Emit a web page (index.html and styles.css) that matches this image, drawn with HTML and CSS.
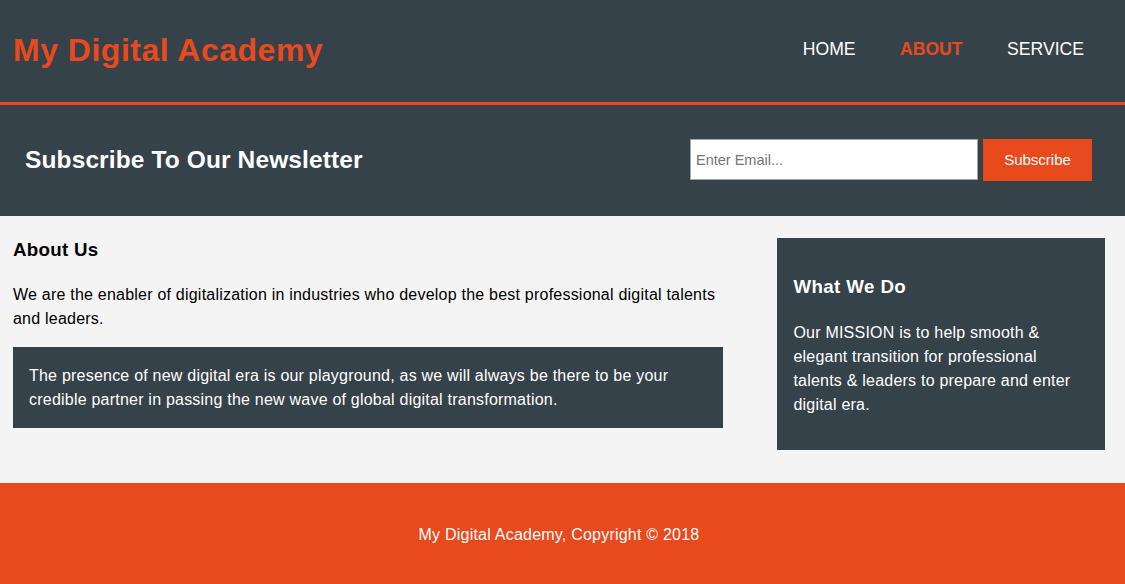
FILE: index.html
```html
<!DOCTYPE html>
<html lang="en">
<head>
<meta charset="utf-8">
<title>My Digital Academy | About</title>
<link rel="stylesheet" href="styles.css">
</head>
<body>
<header class="site-header">
  <div class="header-inner">
    <h1 class="logo">My Digital Academy</h1>
    <nav>
      <ul class="nav-list">
        <li><a class="nav-link" href="#">Home</a></li>
        <li><a class="nav-link current" href="#">About</a></li>
        <li><a class="nav-link" href="#">Service</a></li>
      </ul>
    </nav>
  </div>
</header>

<section class="newsletter">
  <h1 class="newsletter-title">Subscribe To Our Newsletter</h1>
  <form class="newsletter-form">
    <input class="email-input" type="email" placeholder="Enter Email...">
    <button class="subscribe-btn" type="button">Subscribe</button>
  </form>
</section>

<section class="main">
  <article class="main-col">
    <h3 class="page-title">About Us</h3>
    <p class="lead">We are the enabler of digitalization in industries who develop the best professional digital talents and leaders.</p>
    <div class="dark">
      <p>The presence of new digital era is our playground, as we will always be there to be your credible partner in passing the new wave of global digital transformation.</p>
    </div>
  </article>
  <aside class="sidebar">
    <h3 class="sidebar-title">What We Do</h3>
    <p>Our MISSION is to help smooth &amp; elegant transition for professional talents &amp; leaders to prepare and enter digital era.</p>
  </aside>
</section>

<footer class="site-footer">
  <p>My Digital Academy, Copyright &copy; 2018</p>
</footer>
</body>
</html>
```

FILE: styles.css
```css
* {
  box-sizing: border-box;
}

html, body {
  margin: 0;
  padding: 0;
}

body {
  font-family: "Liberation Sans", Arial, sans-serif;
  font-size: 16px;
  line-height: 1.5;
  letter-spacing: 0.22px;
  background: #f4f4f4;
  color: #000;
  overflow: hidden;
}

/* Header */
.site-header {
  background: #35424a;
  height: 105px;
  border-bottom: 3px solid #e8491d;
}

.header-inner {
  display: flex;
  justify-content: space-between;
  align-items: flex-start;
  padding: 32px 21px 0 13px;
}

.logo {
  margin: 0;
  font-size: 32px;
  line-height: 36px;
  font-weight: bold;
  letter-spacing: 0.5px;
  color: #e8491d;
}

.nav-list {
  list-style: none;
  display: flex;
  gap: 4.5px;
  margin: 5px 0 0;
  padding: 0;
}

.nav-list li {
  padding: 0 20px;
}

.nav-link {
  color: #ffffff;
  text-decoration: none;
  text-transform: uppercase;
  font-size: 17.6px;
  line-height: 24px;
  letter-spacing: 0;
}

.nav-link.current {
  color: #e8491d;
  font-weight: bold;
}

/* Newsletter */
.newsletter {
  background: #35424a;
  height: 111px;
  display: flex;
  align-items: center;
  justify-content: space-between;
  padding: 0 33px 0 25px;
}

.newsletter-title {
  margin: 0;
  color: #ffffff;
  font-size: 24.5px;
  line-height: 1;
  font-weight: bold;
  letter-spacing: 0.12px;
}

.newsletter-form {
  display: flex;
  align-items: center;
  gap: 5px;
  margin: 0 0 2px;
}

.email-input {
  width: 288px;
  height: 41px;
  padding: 0 5px;
  border: 1px solid #a2a6a9;
  background: #ffffff;
  font-family: "Liberation Sans", Arial, sans-serif;
  font-size: 14.5px;
  letter-spacing: 0;
  color: #333;
  outline: none;
}

.email-input::placeholder {
  color: #757575;
}

.subscribe-btn {
  width: 109px;
  height: 42px;
  border: 0;
  background: #e8491d;
  color: #ffffff;
  font-family: "Liberation Sans", Arial, sans-serif;
  font-size: 15px;
  letter-spacing: 0;
  padding: 0;
}

/* Main */
.main {
  height: 267px;
  display: flex;
  justify-content: space-between;
  align-items: flex-start;
  padding: 0 20px 0 13px;
}

.main-col {
  width: 65%;
}

.page-title {
  margin: 20px 0 18.72px;
  font-size: 18.72px;
  line-height: 28px;
  font-weight: bold;
  letter-spacing: 0.3px;
}

.lead {
  margin: 0 0 16px;
}

.dark {
  background: #35424a;
  color: #ffffff;
  padding: 17px 16px 16px;
}

.dark p {
  margin: 0;
}

.sidebar {
  width: 30%;
  margin-top: 22px;
  background: #35424a;
  color: #ffffff;
  padding: 16px;
}

.sidebar-title {
  margin: 18.72px 0 20px;
  font-size: 18.72px;
  line-height: 28px;
  font-weight: bold;
  letter-spacing: 0.4px;
}

.sidebar p {
  margin: 0 0 17px;
  line-height: 24px;
}

/* Footer */
.site-footer {
  background: #e8491d;
  color: #ffffff;
  height: 101px;
  padding: 40px 7px 0 0;
  text-align: center;
}

.site-footer p {
  margin: 0;
  line-height: 24px;
}
```
